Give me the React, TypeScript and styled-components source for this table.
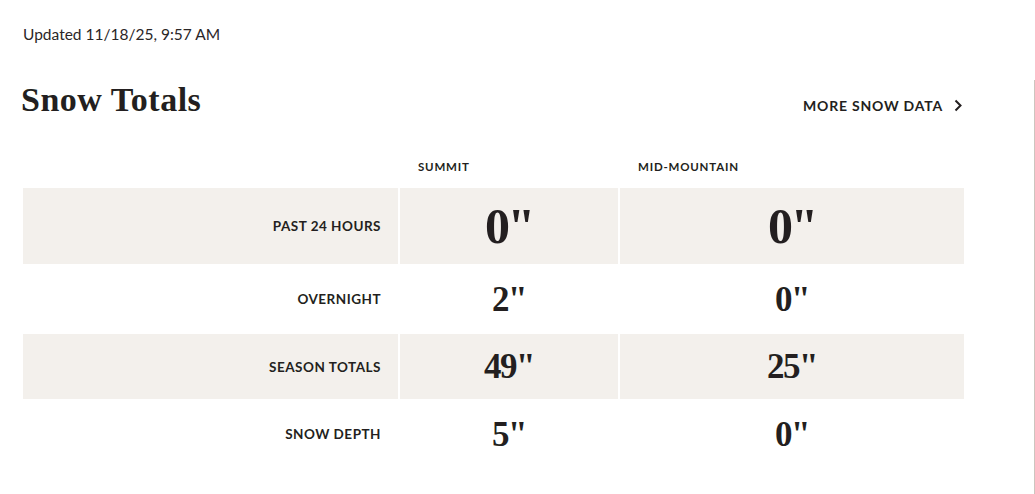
import React from 'react';
import styled, { createGlobalStyle } from 'styled-components';

const GlobalStyle = createGlobalStyle`
  body {
    margin: 0;
    background: #fff;
    color: #231f20;
    font-family: Lato, "Noto Sans", sans-serif;
  }
`;

const Page = styled.div`
  display: flex;
  min-height: 494px;
`;
const Main = styled.main`
  width: 1011px;
  flex: none;
  padding: 24px 0 0 23px;
`;
const Aside = styled.aside`
  flex: 1;
  margin-top: 80px;
  border-left: 1px solid #cdc5bf;
`;
const Updated = styled.p`
  margin: 0;
  font-size: 15.5px;
  line-height: 20px;
  color: #2a2627;
`;
const TitleRow = styled.div`
  width: 941px;
  margin-top: 34px;
  display: flex;
  justify-content: space-between;
  align-items: baseline;
`;
const Title = styled.h2`
  margin: 0 0 0 -2px;
  font-family: "Liberation Serif", serif;
  font-weight: 700;
  font-size: 34px;
  line-height: 44px;
  letter-spacing: 0.5px;
`;
const MoreLink = styled.a`
  display: flex;
  align-items: center;
  gap: 11px;
  font-size: 14px;
  font-weight: 700;
  letter-spacing: 0.8px;
  color: #231f20;
  text-decoration: none;
  margin-right: 2px;
  cursor: pointer;
`;
const Table = styled.div`
  margin-top: 36px;
  width: 941px;
`;
const Row = styled.div<{ $height: number; $shaded?: boolean }>`
  display: grid;
  grid-template-columns: 375px 218px 344px;
  column-gap: 2px;
  height: ${(p) => p.$height}px;
  & > * {
    background: ${(p) => (p.$shaded ? '#f3f0ec' : 'transparent')};
  }
`;
const HeadRow = styled.div`
  display: grid;
  grid-template-columns: 375px 218px 344px;
  column-gap: 2px;
  padding-bottom: 12px;
`;
const HeadCell = styled.div`
  padding-left: 18px;
  font-size: 11.5px;
  line-height: 18px;
  font-weight: 700;
  letter-spacing: 0.8px;
`;
const Label = styled.div`
  display: flex;
  align-items: center;
  justify-content: flex-end;
  padding-right: 17px;
  font-size: 13.5px;
  font-weight: 700;
  letter-spacing: 0.5px;
`;
const Value = styled.div<{ $big?: boolean }>`
  display: flex;
  align-items: center;
  justify-content: center;
  font-family: "Liberation Serif", serif;
  font-weight: 700;
  font-size: ${(p) => (p.$big ? 50 : 35)}px;
  letter-spacing: ${(p) => (p.$big ? -2.5 : -1.5)}px;
  line-height: 1;
`;

const rows = [
  { label: 'PAST 24 HOURS', summit: '0"', mid: '0"', height: 76, shaded: true, big: true },
  { label: 'OVERNIGHT', summit: '2"', mid: '0"', height: 70 },
  { label: 'SEASON TOTALS', summit: '49"', mid: '25"', height: 65, shaded: true },
  { label: 'SNOW DEPTH', summit: '5"', mid: '0"', height: 70 },
];

export default function App() {
  return (
    <Page>
      <GlobalStyle />
      <Main>
        <Updated>Updated 11/18/25, 9:57 AM</Updated>
        <TitleRow>
          <Title>Snow Totals</Title>
          <MoreLink>
            MORE SNOW DATA
            <svg width="8" height="13" viewBox="0 0 8 13" fill="none">
              <path d="M1.5 1.5L6.5 6.5L1.5 11.5" stroke="#231f20" strokeWidth="2" />
            </svg>
          </MoreLink>
        </TitleRow>
        <Table>
          <HeadRow>
            <div />
            <HeadCell>SUMMIT</HeadCell>
            <HeadCell>MID-MOUNTAIN</HeadCell>
          </HeadRow>
          {rows.map((r) => (
            <Row key={r.label} $height={r.height} $shaded={r.shaded}>
              <Label>{r.label}</Label>
              <Value $big={r.big}>{r.summit}</Value>
              <Value $big={r.big}>{r.mid}</Value>
            </Row>
          ))}
        </Table>
      </Main>
      <Aside />
    </Page>
  );
}
